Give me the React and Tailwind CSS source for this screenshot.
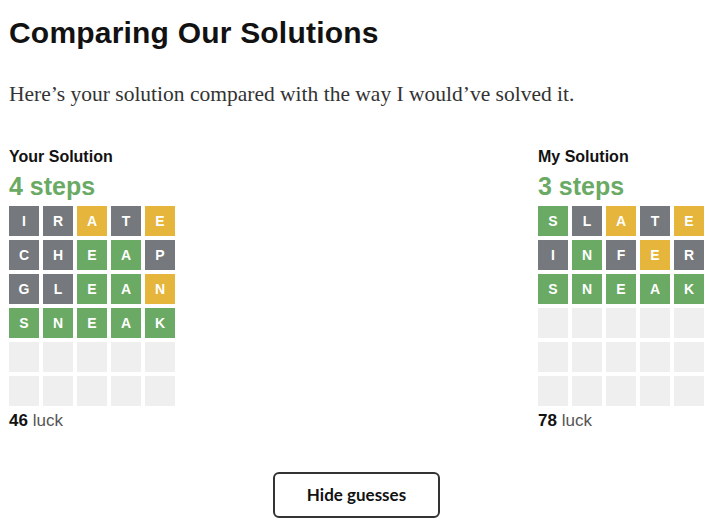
const YOURS = {
  label: "Your Solution",
  steps: "4 steps",
  luck: 46,
  rows: [
    [["I", "x"], ["R", "x"], ["A", "y"], ["T", "x"], ["E", "y"]],
    [["C", "x"], ["H", "x"], ["E", "g"], ["A", "g"], ["P", "x"]],
    [["G", "x"], ["L", "x"], ["E", "g"], ["A", "g"], ["N", "y"]],
    [["S", "g"], ["N", "g"], ["E", "g"], ["A", "g"], ["K", "g"]],
  ],
};

const MINE = {
  label: "My Solution",
  steps: "3 steps",
  luck: 78,
  rows: [
    [["S", "g"], ["L", "x"], ["A", "y"], ["T", "x"], ["E", "y"]],
    [["I", "x"], ["N", "g"], ["F", "x"], ["E", "y"], ["R", "x"]],
    [["S", "g"], ["N", "g"], ["E", "g"], ["A", "g"], ["K", "g"]],
  ],
};

// x = absent, y = present, g = correct
const TILE = {
  x: "bg-[#75787c]",
  y: "bg-[#e5b53c]",
  g: "bg-[#6aaa64]",
};

const Board = ({ rows }) => {
  const filled = [...rows];
  while (filled.length < 6) filled.push(null);
  return (
    <div className="flex flex-col gap-[4px]">
      {filled.map((row, r) => (
        <div key={r} className="flex gap-[4px]">
          {Array.from({ length: 5 }).map((_, c) =>
            row ? (
              <div
                key={c}
                className={`w-[30px] h-[30px] flex items-center justify-center text-white text-[14px] font-bold ${TILE[row[c][1]]}`}
              >
                {row[c][0]}
              </div>
            ) : (
              <div key={c} className="w-[30px] h-[30px] bg-[#efefef]" />
            )
          )}
        </div>
      ))}
    </div>
  );
};

const Solution = ({ data }) => (
  <div className="flex flex-col">
    <h3 className="text-[16px] font-bold text-[#121212] leading-[20px]">{data.label}</h3>
    <p className="mt-[5px] text-[25px] font-bold text-[#6aaa64] leading-[28px] mb-[6px]">{data.steps}</p>
    <Board rows={data.rows} />
    <p className="mt-[5px] text-[17px] text-[#555] leading-[20px]">
      <span className="font-bold text-[#121212]">{data.luck}</span> luck
    </p>
  </div>
);

export default function App() {
  return (
    <div className="w-[720px] h-[532px] bg-white px-[9px] pt-[15px] font-['Liberation_Sans',Arial,sans-serif]">
      <h1 className="text-[30px] font-bold text-[#121212] leading-[36px] tracking-[0.2px]">Comparing Our Solutions</h1>
      <p className="mt-[30px] text-[21.5px] text-[#333] font-['Liberation_Serif',Georgia,serif] leading-[26px]">
        Here’s your solution compared with the way I would’ve solved it.
      </p>

      <div className="mt-[40px] flex justify-between pr-[7px]">
        <Solution data={YOURS} />
        <Solution data={MINE} />
      </div>

      <div className="mt-[41px] flex justify-center pr-[7px]">
        <button className="w-[167px] h-[46px] border-2 border-[#333] rounded-[6px] text-[17px] font-bold text-[#121212] font-['Lato',sans-serif]">
          Hide guesses
        </button>
      </div>
    </div>
  );
}
